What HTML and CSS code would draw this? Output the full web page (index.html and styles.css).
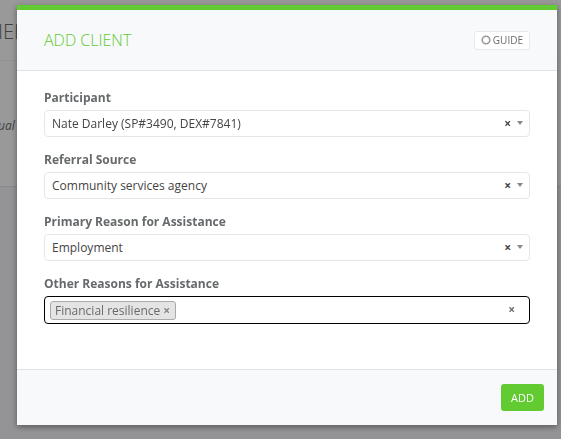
FILE: index.html
```
<!DOCTYPE html>
<html lang="en">
<head>
  <meta charset="UTF-8">
  <meta name="viewport" content="width=device-width, initial-scale=1.0">
  <title>Add Client</title>
  <link rel="stylesheet" href="styles.css">
</head>
<body>
  <div class="page" aria-hidden="true">
    <div class="page-title">IEN</div>
    <div class="page-panel"><em>ual</em></div>
  </div>

  <div class="backdrop">
    <form class="modal" role="dialog" aria-labelledby="modalTitle">
      <header class="modal-header">
        <h1 id="modalTitle">Add Client</h1>
        <button type="button" class="guide">
          <svg width="10" height="10" viewBox="0 0 10 10"><circle cx="5" cy="5" r="3.8" fill="none" stroke="#999" stroke-width="1.6"/></svg>
          Guide
        </button>
      </header>

      <div class="modal-body">
        <div class="field">
          <label for="participant">Participant</label>
          <div class="control">
            <select id="participant">
              <option>Nate Darley (SP#3490, DEX#7841)</option>
            </select>
            <button type="button" class="clear" aria-label="Clear participant">×</button>
            <span class="arrow"></span>
          </div>
        </div>

        <div class="field">
          <label for="referral">Referral Source</label>
          <div class="control">
            <select id="referral">
              <option>Community services agency</option>
            </select>
            <button type="button" class="clear" aria-label="Clear referral source">×</button>
            <span class="arrow"></span>
          </div>
        </div>

        <div class="field">
          <label for="primary">Primary Reason for Assistance</label>
          <div class="control">
            <select id="primary">
              <option>Employment</option>
            </select>
            <button type="button" class="clear" aria-label="Clear primary reason">×</button>
            <span class="arrow"></span>
          </div>
        </div>

        <div class="field">
          <label for="other">Other Reasons for Assistance</label>
          <div class="multi">
            <span class="tag">Financial resilience <button type="button" aria-label="Remove Financial resilience">×</button></span>
            <input type="text" id="other">
            <button type="button" class="clear-all" aria-label="Clear all reasons">×</button>
          </div>
        </div>
      </div>

      <footer class="modal-footer">
        <button type="submit" class="add">Add</button>
      </footer>
    </form>
  </div>
</body>
</html>
```

FILE: styles.css
```
* { box-sizing: border-box; }
body { margin: 0; min-height: 100vh; background: #949496; color: #676a6c; font-family: "Open Sans", sans-serif; font-size: 12px; line-height: 18px; overflow: hidden; }
button, input, select { font: inherit; color: inherit; margin: 0; padding: 0; border: none; background: none; }
button { cursor: pointer; }

/* page behind the dialog */
.page { color: #3f4143; text-indent: -2px; }
.page-title { height: 61px; padding-top: 18px; background: #999; border-bottom: 1px solid #939393; font-size: 20px; font-weight: 300; line-height: 28px; }
.page-panel { height: 126px; padding-top: 56px; background: #999; border-bottom: 1px solid #888; }

.backdrop { position: fixed; inset: 0; padding: 5px 4px 14px 17px; }
.modal { border-top: 5px solid #61cb31; background: #fff; box-shadow: 0 2px 6px rgba(0, 0, 0, 0.4); }

.modal-header { display: flex; align-items: center; justify-content: space-between; padding: 15px 27px; background: #f7f9fb; border-bottom: 1px solid #e3e3e3; }
.modal-header h1 { margin: 0; color: #61cb31; font-size: 16px; font-weight: 300; line-height: 30px; text-transform: uppercase; }
.guide { display: flex; align-items: center; gap: 2px; height: 19px; padding: 0 6px; border: 1px solid #e7eaec; border-radius: 3px; background: #fff; font-size: 10px; text-transform: uppercase; }

.modal-body { padding: 18px 27px 45px; }
.field { margin-bottom: 14px; }
.field:last-child { margin-bottom: 0; }
.field label { display: block; font-weight: 700; margin-bottom: 3px; }

.control { position: relative; }
.control select { display: block; width: 100%; height: 27px; padding: 0 40px 0 7px; border: 1px solid #e5e6e7; border-radius: 4px; background: #fff; color: #444; appearance: none; }
.clear { position: absolute; top: 5px; right: 19px; color: #444; font-weight: 700; }
.arrow { position: absolute; top: 11px; right: 7px; border: 3px solid transparent; border-top: 4px solid #888; border-bottom: 0; }

.multi { display: flex; align-items: center; height: 28px; padding: 0 14px 0 5px; border: 1px solid #000; border-radius: 4px; }
.tag { padding: 0 5px 0 4px; border: 1px solid #aaa; border-radius: 3px; background: #e4e4e4; line-height: 17px; white-space: nowrap; }
.tag button { color: #888; font-weight: 700; }
.multi input { flex: 1; min-width: 0; outline: none; }
.clear-all { font-weight: 700; }

.modal-footer { display: flex; justify-content: flex-end; padding: 14px 13px; background: #f7f9fb; border-top: 1px solid #e3e3e3; }
.add { height: 27px; padding: 0 10px; border-radius: 3px; background: #61cb31; color: #fff; font-size: 11px; text-transform: uppercase; }
```
